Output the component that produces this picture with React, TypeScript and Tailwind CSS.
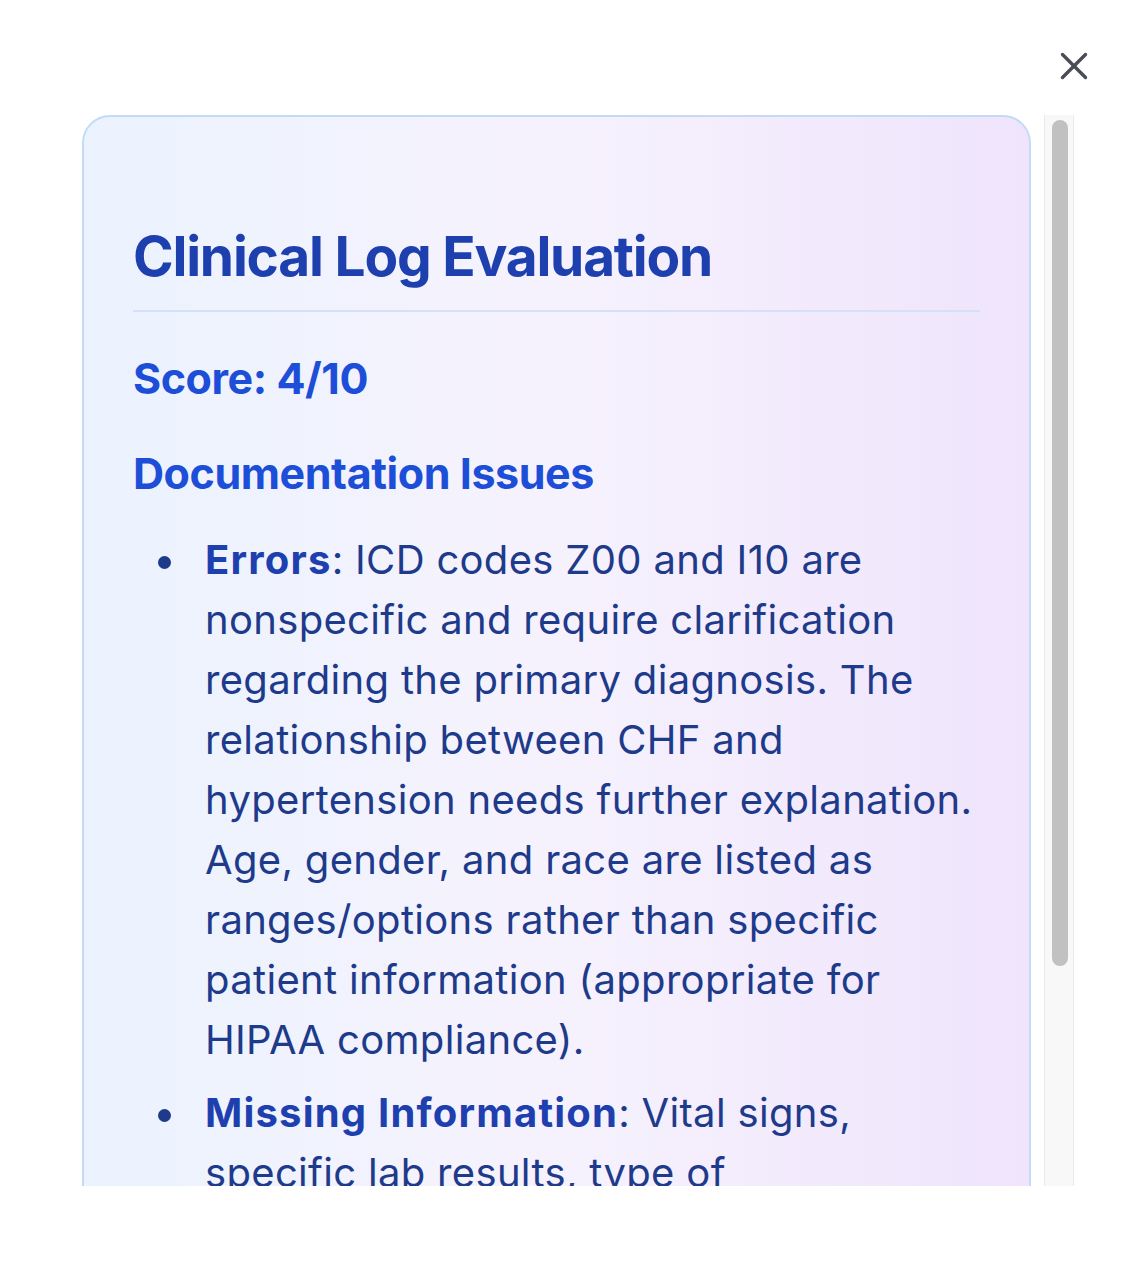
import React from "react";

export default function App() {
  return (
    <div className="w-[1140px] h-[1278px] bg-white flex flex-col" style={{ fontFamily: "Inter, 'Noto Sans', sans-serif" }}>
      <div className="h-[115px] flex justify-end items-start pt-[50px] pr-[50px]">
        <button aria-label="Close" className="w-[32px] h-[32px] text-[#4a4d55]">
          <svg width="32" height="32" viewBox="0 0 32 32" fill="none" stroke="currentColor" strokeWidth="3.4" strokeLinecap="round">
            <line x1="4.5" y1="4.5" x2="27.5" y2="27.5" />
            <line x1="27.5" y1="4.5" x2="4.5" y2="27.5" />
          </svg>
        </button>
      </div>
      <div className="ml-[82px] h-[1071px] flex gap-[13px]">
        <div className="w-[949px] h-full overflow-hidden">
          <div className="border-2 border-[#c3dbf7] rounded-[28px] bg-gradient-to-r from-[#ebf3fe] via-[#f6f2fd] to-[#efe4fc] px-[49px] pt-[106px] pb-[120px]">
            <h2 className="text-[55px] leading-[1.2] font-bold text-[#1e40af] pb-[21px] border-b-2 border-[#d3e2f8] tracking-[-0.022em]">
              Clinical Log Evaluation
            </h2>
            <h3 className="mt-[41px] text-[43px] leading-[1.2] font-bold text-[#1d4ed8] tracking-[-0.01em]">Score: 4/10</h3>
            <h3 className="mt-[43px] text-[43px] leading-[1.2] font-bold text-[#1d4ed8] tracking-[-0.01em]">Documentation Issues</h3>
            <ul className="mt-[31px] flex flex-col gap-[13px] text-[40px] leading-[60px] text-[#1e3a8a] tracking-[0.008em]">
              <li className="flex">
                <span className="w-[72px] h-[60px] shrink-0 flex items-center pl-[25px] pt-[4px]">
                  <span className="w-[13px] h-[13px] rounded-full bg-[#1e3a8a]" />
                </span>
                <span>
                  <strong className="font-bold text-[#1e40af] tracking-[0.03em]">Errors</strong>: ICD codes Z00 and I10 are nonspecific and require clarification regarding the primary diagnosis. The relationship between CHF and hypertension needs further explanation. Age, gender, and race are listed as ranges/options rather than specific patient information (appropriate for HIPAA compliance).
                </span>
              </li>
              <li className="flex">
                <span className="w-[72px] h-[60px] shrink-0 flex items-center pl-[25px] pt-[4px]">
                  <span className="w-[13px] h-[13px] rounded-full bg-[#1e3a8a]" />
                </span>
                <span>
                  <strong className="font-bold text-[#1e40af] tracking-[0.03em]">Missing Information</strong>: Vital signs, specific lab results, type of treatment/medications prescribed, and follow-up plans are not documented.
                </span>
              </li>
            </ul>
          </div>
        </div>
        <div className="w-[30px] h-full bg-[#f8f8f8] border-x border-[#e9e9e9] pl-[7px] pr-[5px] pt-[5px]">
          <div className="w-[16px] h-[846px] rounded-full bg-[#c1c1c1]" />
        </div>
      </div>
    </div>
  );
}
